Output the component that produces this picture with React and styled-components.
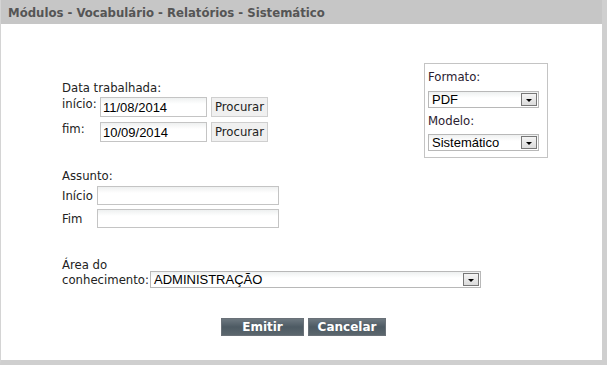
import React from "react";
import styled, { createGlobalStyle } from "styled-components";

const GlobalStyle = createGlobalStyle`
  html, body {
    margin: 0;
    padding: 0;
    background: #ffffff;
  }
  body {
    font-family: "DejaVu Sans", Verdana, sans-serif;
    font-size: 11.7px;
    color: #222;
  }
`;

const S = {
  Window: styled.div`
    width: 607px;
    height: 365px;
    box-sizing: border-box;
    display: flex;
    flex-direction: column;
    background: #fff;
    border-left: 1px solid #d4d4d4;
    border-right: 5px solid #cfcfcf;
    border-bottom: 5px solid #cfcfcf;
    overflow: hidden;
  `,
  TitleBar: styled.div`
    flex-shrink: 0;
    height: 24px;
    background: #c6c6c6;
    display: flex;
    align-items: center;
    padding-left: 7px;
    font-family: "DejaVu Sans Condensed", "DejaVu Sans", sans-serif;
    font-weight: bold;
    font-size: 13px;
    color: #555;
  `,
  Body: styled.div`
    flex: 1;
    padding: 12px 0 0 61px;
  `,
  Top: styled.div`
    display: flex;
    align-items: flex-start;
  `,
  Left: styled.div`
    display: flex;
    flex-direction: column;
    padding-top: 45px;
  `,
  Label: styled.div`
    line-height: 14px;
    white-space: nowrap;
    margin-top: ${(p) => p.$mt || 0}px;
  `,
  Row: styled.div`
    display: flex;
    align-items: center;
    gap: 4px;
    margin-top: ${(p) => p.$mt || 0}px;
  `,
  RowLabel: styled.div`
    flex-shrink: 0;
    width: ${(p) => p.$w}px;
    white-space: nowrap;
    align-self: ${(p) => (p.$top ? "flex-start" : "center")};
  `,
  Input: styled.input`
    box-sizing: border-box;
    width: ${(p) => p.$w}px;
    height: ${(p) => p.$h || 20}px;
    border: 1px solid #c4c4c4;
    background: linear-gradient(#eef0f0, #fff 6px);
    font-family: "Liberation Sans", Arial, sans-serif;
    font-size: 13px;
    padding: 1px 2px 0;
    color: #000;
    outline: none;
  `,
  Button: styled.button`
    box-sizing: border-box;
    width: 57px;
    height: 20px;
    padding: 0;
    border: 1px solid #cfcfcf;
    background: #f0f0f0;
    font-family: "DejaVu Sans", Verdana, sans-serif;
    font-size: 11.7px;
    color: #222;
  `,
  FormatBox: styled.div`
    margin-left: 156px;
    width: 124px;
    height: 95px;
    box-sizing: border-box;
    border: 1px solid #c4c4c4;
    margin-top: 27px;
    padding: 6px 0 0 3px;
    display: flex;
    flex-direction: column;
    color: #2a2030;
  `,
  Select: styled.div`
    box-sizing: border-box;
    flex-shrink: 0;
    width: ${(p) => p.$w}px;
    height: 17px;
    border: 1px solid #b8b8b8;
    background: linear-gradient(#eef0f0, #fff 6px);
    display: flex;
    align-items: center;
    justify-content: space-between;
    padding-left: 3px;
    font-family: "Liberation Sans", Arial, sans-serif;
    font-size: 13px;
    color: #000;
    margin-top: ${(p) => p.$mt || 0}px;
  `,
  Arrow: styled.span`
    box-sizing: border-box;
    width: 16px;
    height: 13px;
    margin-right: 1px;
    border: 1px solid #777;
    background: linear-gradient(#f4f4f4, #dcdcdc);
    display: flex;
    align-items: center;
    justify-content: center;
    &::after {
      content: "";
      border-left: 3px solid transparent;
      border-right: 3px solid transparent;
      border-top: 3px solid #000;
      margin-top: 2px;
    }
  `,
  Section: styled.div`
    margin-top: ${(p) => p.$mt}px;
    display: flex;
    flex-direction: column;
  `,
  Buttons: styled.div`
    display: flex;
    gap: 4px;
    margin-top: 30px;
    margin-left: 159px;
  `,
  DarkButton: styled.button`
    box-sizing: border-box;
    width: ${(p) => p.$w}px;
    height: 18px;
    border: 1px solid #6a7178;
    background: linear-gradient(#6d7880, #4d5a63 50%, #5b666d);
    color: #fff;
    font-family: "DejaVu Sans", Verdana, sans-serif;
    font-weight: bold;
    font-size: 12px;
    padding: 0;
    line-height: 16px;
  `,
};

function App() {
  return (
    <>
      <GlobalStyle />
      <S.Window>
        <S.TitleBar>Módulos - Vocabulário - Relatórios - Sistemático</S.TitleBar>
        <S.Body>
          <S.Top>
            <S.Left>
              <S.Label>Data trabalhada:</S.Label>
              <S.Row $mt={2}>
                <S.RowLabel $w={34} $top>início:</S.RowLabel>
                <S.Input $w={107} defaultValue="11/08/2014" />
                <S.Button>Procurar</S.Button>
              </S.Row>
              <S.Row $mt={5}>
                <S.RowLabel $w={34} $top>fim:</S.RowLabel>
                <S.Input $w={107} defaultValue="10/09/2014" />
                <S.Button>Procurar</S.Button>
              </S.Row>
            </S.Left>
            <S.FormatBox>
              <S.Label>Formato:</S.Label>
              <S.Select $w={111} $mt={7}>
                PDF
                <S.Arrow />
              </S.Select>
              <S.Label $mt={6}>Modelo:</S.Label>
              <S.Select $w={111} $mt={6}>
                Sistemático
                <S.Arrow />
              </S.Select>
            </S.FormatBox>
          </S.Top>
          <S.Section $mt={11}>
            <S.Label>Assunto:</S.Label>
            <S.Row $mt={3}>
              <S.RowLabel $w={31}>Início</S.RowLabel>
              <S.Input $w={182} $h={19} />
            </S.Row>
            <S.Row $mt={4}>
              <S.RowLabel $w={31}>Fim</S.RowLabel>
              <S.Input $w={182} $h={19} />
            </S.Row>
          </S.Section>
          <S.Section $mt={30}>
            <S.Label>Área do</S.Label>
            <S.Row $mt={-1}>
              <S.RowLabel $w={84}>conhecimento:</S.RowLabel>
              <S.Select $w={331}>
                ADMINISTRAÇÃO
                <S.Arrow />
              </S.Select>
            </S.Row>
          </S.Section>
          <S.Buttons>
            <S.DarkButton $w={83}>Emitir</S.DarkButton>
            <S.DarkButton $w={78}>Cancelar</S.DarkButton>
          </S.Buttons>
        </S.Body>
      </S.Window>
    </>
  );
}

export default App;
